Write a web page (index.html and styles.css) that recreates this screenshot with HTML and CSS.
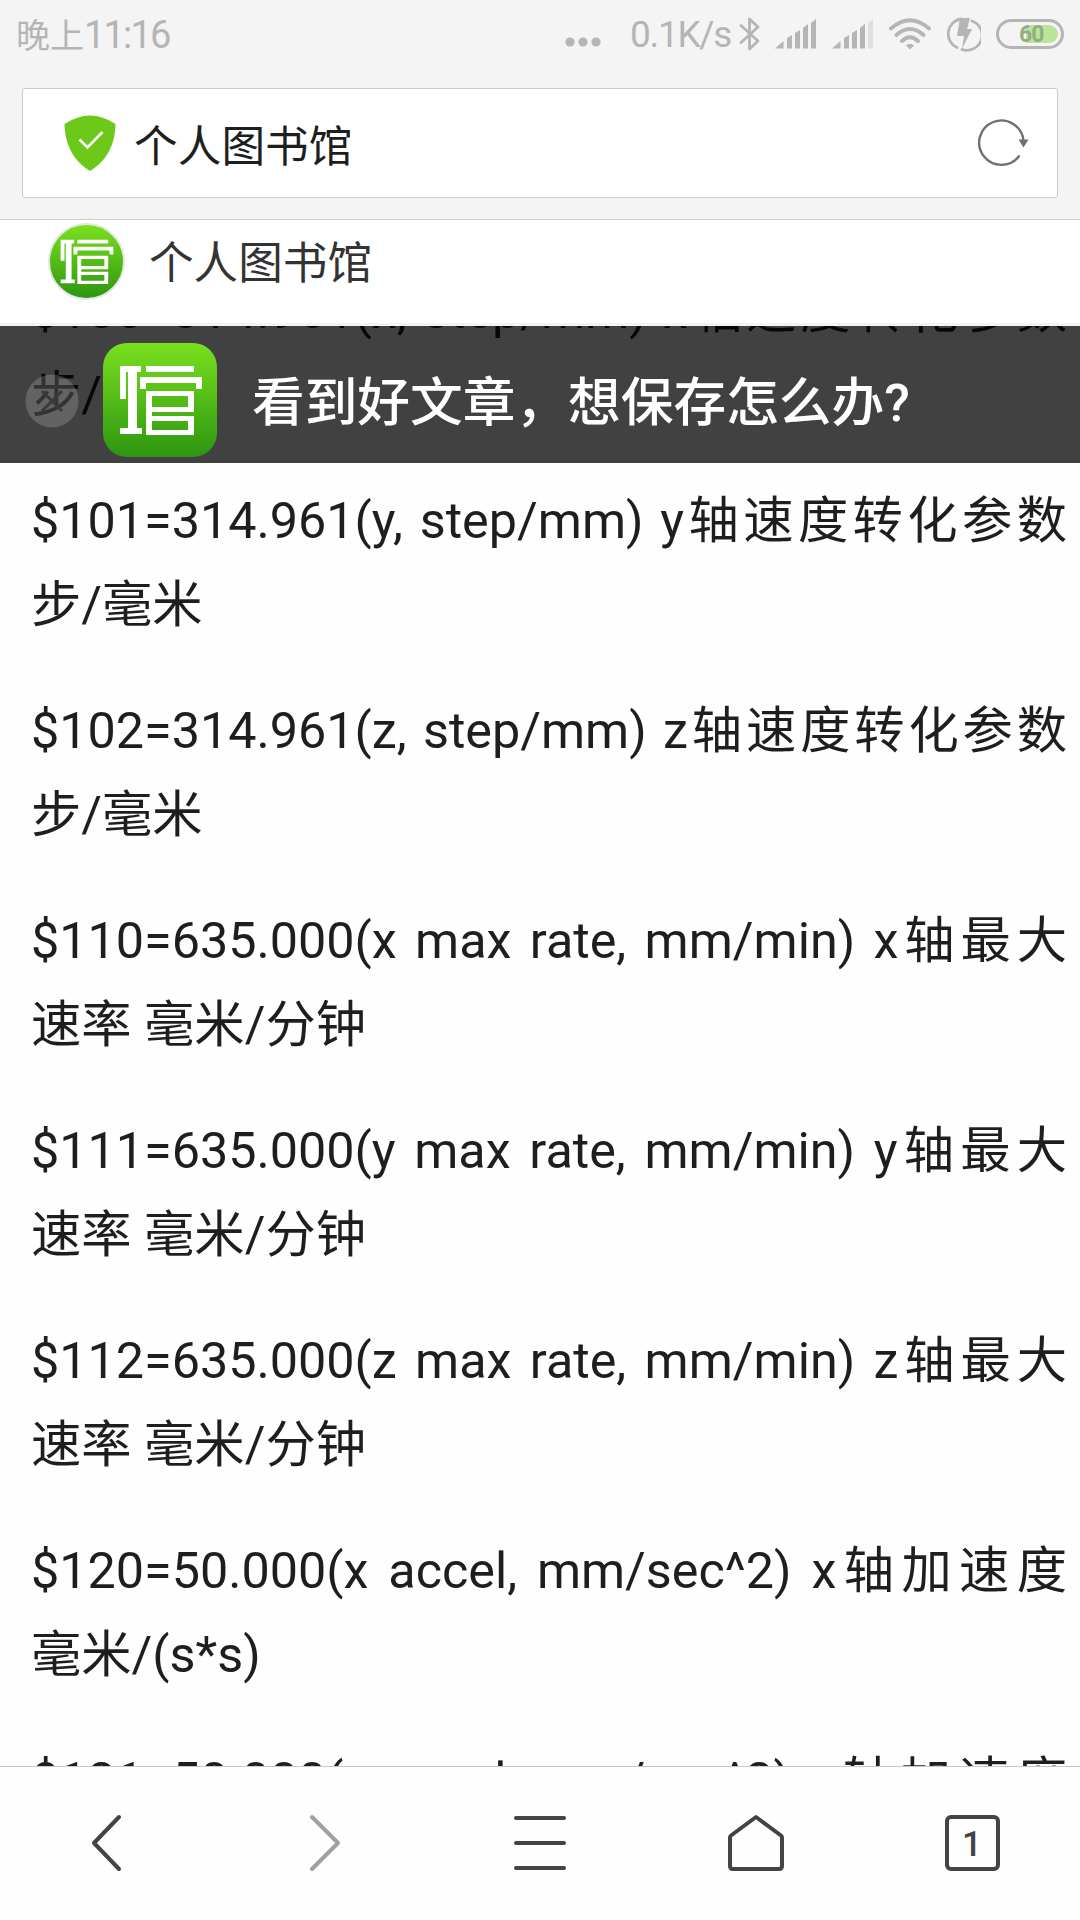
FILE: index.html
```html
<!DOCTYPE html>
<html lang="zh-CN">
<head>
    <meta charset="UTF-8">
    <meta name="viewport" content="width=device-width, initial-scale=1.0">
    <title>个人图书馆</title>
    <link rel="stylesheet" href="styles.css">
</head>
<body>
    <svg width="0" height="0" class="defs">
        <defs>
            <linearGradient id="green" x1="0" y1="0" x2="0" y2="1">
                <stop offset="0" stop-color="#7ae01e"/>
                <stop offset="1" stop-color="#2d9610"/>
            </linearGradient>
            <symbol id="logo" viewBox="0 0 84 70">
                <path fill="#fff" d="M1 1h21v6h-4v56h5v6H1v-6h8V7H7v27H1zM27 1h48v6H27zM21 12h62v12h-6v-6H27v6h-6zM27 26h48v21H33v4h42v19H27zM33 31v11h36V31zM33 56v9h36v-9z" fill-rule="evenodd"/>
            </symbol>
        </defs>
    </svg>

    <div class="status">
        <div class="time">晚上<span>11:16</span></div>
        <div class="status-icons">
            <svg class="dots" width="36" height="10" viewBox="0 0 36 10"><circle cx="5" cy="5" r="4.6"/><circle cx="18" cy="5" r="4.6"/><circle cx="31" cy="5" r="4.6"/></svg>
            <span class="speed">0.1K/s</span>
            <svg class="bt line" width="22" height="36" viewBox="0 0 22 36"><path d="M2 9.500L19 25 10.500 33V3L19 11 2 26.500" stroke-width="2.800"/></svg>
            <svg class="sig" width="41" height="30" viewBox="0 0 41 30"><path d="M0 29.500L8.500 22v7.500zM12 19l5-3v13.500h-5zM20 14l5-3v18.500h-5zM28 9l5-4v24.500h-5zM36 4l5-4v29.500h-5z"/></svg>
            <svg class="sig2" width="41" height="30" viewBox="0 0 41 30"><path d="M0 29.500L8.500 22v7.500zM12 19l5-3v13.500h-5zM20 14l5-3v18.500h-5zM28 9l5-4v24.500h-5z"/><path fill="#dfdfdf" d="M36 4l5-4v29.500h-5z"/></svg>
            <svg class="wifi line" width="42" height="32" viewBox="0 0 42 32"><path d="M2 10.500Q21-6 40 10.500M7.500 17Q21 5 34.500 17M13 23Q21 15.500 29 23" stroke-width="4"/><path class="solid" d="M17 27.500q4-3.500 8 0l-4 4z"/></svg>
            <svg class="charge line" width="34" height="36" viewBox="0 0 34 36"><path d="M14 3A15 15 0 0 0 10 31.500M25 5A15 15 0 0 1 15 33.500" stroke-width="2.800"/><path class="solid" d="M13 2h10l-3 11h5L15 33l2-13h-7z"/></svg>
            <div class="battery"><div class="level">60</div></div>
        </div>
    </div>

    <div class="address">
        <svg width="52" height="56" viewBox="0 0 52 56"><path fill="#6cc91a" d="M0.500 9Q26-8 51.500 9C51 32 41 47 26 56 11 47 1 32 0.500 9z"/><path d="M15.500 24.500l8 8L38.500 17" fill="none" stroke="#fff" stroke-width="2.600"/></svg>
        <span class="address-title">个人图书馆</span>
        <svg class="reload" width="52" height="50" viewBox="0 0 52 50"><path d="M45.500 23A22.200 22.200 0 1 0 41.500 37.500" fill="none" stroke="#707070" stroke-width="2.400"/><path fill="#707070" d="M40.500 21.500h10l-5 8z"/></svg>
    </div>

    <div class="site-header">
        <div class="avatar"><svg width="54" height="45"><use href="#logo"/></svg></div>
        <span>个人图书馆</span>
    </div>

    <div class="content">
        <div class="article">
            <p>$100=314.961(x, step/mm) x轴速度转化参数步/毫米</p>
            <p>$101=314.961(y, step/mm) y轴速度转化参数步/毫米</p>
            <p>$102=314.961(z, step/mm) z轴速度转化参数步/毫米</p>
            <p>$110=635.000(x max rate, mm/min) x轴最大速率 毫米/分钟</p>
            <p>$111=635.000(y max rate, mm/min) y轴最大速率 毫米/分钟</p>
            <p>$112=635.000(z max rate, mm/min) z轴最大速率 毫米/分钟</p>
            <p>$120=50.000(x accel, mm/sec^2) x轴加速度 毫米/(s*s)</p>
            <p>$121=50.000(y accel, mm/sec^2) y轴加速度 毫米/(s*s)</p>
        </div>
        <div class="banner">
            <svg class="close" width="54" height="54" viewBox="0 0 54 54"><circle cx="27" cy="27" r="26.500" fill="#fff" fill-opacity=".18"/><path d="M17 17l20 20M37 17L17 37" stroke="#3a3a3a" stroke-width="3"/></svg>
            <svg class="app" width="114" height="114" viewBox="0 0 114 114"><rect width="114" height="114" rx="24" fill="url(#green)"/><use href="#logo" x="16" y="22" width="84" height="70"/></svg>
            <span>看到好文章，想保存怎么办?</span>
        </div>
    </div>

    <div class="nav">
        <div class="item"><svg width="56" height="58" viewBox="0 0 56 58"><path d="M39 3L14 29l25 26"/></svg></div>
        <div class="item off"><svg width="56" height="58" viewBox="0 0 56 58"><path d="M16 3l26 26-26 26"/></svg></div>
        <div class="item"><svg width="56" height="58" viewBox="0 0 56 58"><path d="M4 4h48M4 29h48M4 54h48"/></svg></div>
        <div class="item"><svg width="56" height="58" viewBox="0 0 56 58"><path d="M28 3l25 18.500q1 1 1 2V52q0 3-3 3H5q-3 0-3-3V23.500q0-1 1-2z"/></svg></div>
        <div class="item"><div class="tabs">1</div></div>
    </div>
</body>
</html>
```

FILE: styles.css
```css
* { box-sizing: border-box; }
body {
    margin: 0;
    width: 1080px;
    height: 1920px;
    overflow: hidden;
    display: flex;
    flex-direction: column;
    background-color: #fefefe;
    color: #1e1e1e;
    font-family: Roboto, "Noto Sans CJK SC", sans-serif;
}
svg { display: block; flex: none; }
.defs { position: absolute; }

/* status bar */
.status {
    height: 88px;
    padding: 0 16px 20px;
    display: flex;
    justify-content: space-between;
    align-items: center;
    background-color: #f4f4f4;
    color: #b5b5b5;
}
.time { margin-top: -2px; font-size: 34px; white-space: nowrap; }
.time span { font-size: 38px; letter-spacing: -1.8px; }
.status-icons {
    display: flex;
    align-items: center;
    fill: #b5b5b5;
}
.line { fill: none; stroke: #b5b5b5; stroke-linejoin: round; stroke-linecap: round; }
.solid { fill: #b5b5b5; stroke: none; }
.dots { margin: 16px 29px 0 0; }
.speed { width: 109px; font-size: 37px; letter-spacing: -1.3px; }
.sig { margin-left: 14px; }
.sig2 { margin: 0 16px; }
.charge { margin: 0 15px 0 16px; }
.battery {
    width: 68px;
    height: 30px;
    padding: 3px;
    border: 3px solid #b5b5b5;
    border-radius: 15px;
}
.level {
    height: 18px;
    padding-left: 17px;
    border-radius: 9px;
    background: linear-gradient(90deg, transparent 24px, #b9e59b 24px);
    font-size: 23px;
    font-weight: bold;
    line-height: 19px;
    letter-spacing: -1px;
    color: #93ad84;
}

/* address bar */
.address {
    height: 110px;
    margin: 0 22px 0 22px;
    padding: 0 27px 0 41px;
    display: flex;
    align-items: center;
    background-color: #fff;
    border: 1px solid #ccc;
    border-radius: 3px;
    box-shadow: 0 0 0 30px #f4f4f4;
    clip-path: inset(0 -23px -21px -23px);
}
.address-title { margin-left: 18px; font-size: 43.7px; }
.reload { margin-left: auto; }

.site-header {
    height: 107px;
    margin-top: 21px;
    padding: 0 0 20px 48px;
    display: flex;
    align-items: center;
    gap: 24px;
    background-color: #fff;
    border-top: 1px solid #ccc;
    border-bottom: 3px solid #f3f3f3;
    font-size: 44.6px;
    color: #333;
    z-index: 1;
}
.site-header span { margin-top: -5px; }
.avatar {
    width: 77px;
    height: 77px;
    display: flex;
    align-items: center;
    justify-content: center;
    border: 2px solid #e2e8e2;
    border-radius: 50%;
    background: linear-gradient(#7ae01e, #2d9610);
}

.content {
    position: relative;
    height: 1440px;
    overflow: hidden;
}
.article {
    margin-top: -57px;
    padding: 0 13px 0 31px;
    font-size: 50.3px;
    line-height: 84px;
    text-align: justify;
}
.article p { margin: 0 0 42px; }

/* floating promo strip */
.banner {
    position: absolute;
    top: 0;
    left: 0;
    width: 100%;
    height: 137px;
    padding: 0 25px;
    display: flex;
    align-items: center;
    background-color: rgba(0, 0, 0, 0.745);
    color: #fff;
    font-size: 52.7px;
    font-weight: 500;
    font-family: Roboto, "Noto Sans CJK SC", sans-serif;
}
.close { margin-top: 12px; }
.app { margin: 11px 35px 0 24px; }
.banner span { margin-top: 16px; line-height: 60px; }

/* bottom toolbar */
.nav {
    flex: 1;
    padding-bottom: 2px;
    display: flex;
    border-top: 1px solid #c8c8c8;
    background-color: #fefefe;
}
.item {
    flex: 1;
    display: flex;
    align-items: center;
    justify-content: center;
}
.item svg {
    fill: none;
    stroke: #444;
    stroke-width: 4;
    stroke-linecap: round;
    stroke-linejoin: round;
}
.off svg { stroke: #a0a0a0; }
.tabs {
    width: 55px;
    height: 56px;
    border: 4px solid #444;
    border-radius: 6px;
    color: #444;
    text-align: center;
    font-size: 35px;
    font-weight: 500;
    line-height: 51px;
}
```
